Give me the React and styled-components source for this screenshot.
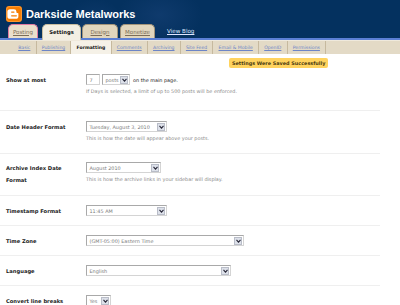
import React from "react";
import styled, { createGlobalStyle } from "styled-components";

const Global = createGlobalStyle`
  html, body { margin: 0; padding: 0; background: #fff; }
  body {
    width: 400px;
    height: 305px;
    overflow: hidden;
    font-family: "DejaVu Sans", Verdana, sans-serif;
  }
`;

const TopBar = styled.header`
  background:
    radial-gradient(ellipse 45px 45px at 95px 30px, rgba(40, 80, 140, 0.35), transparent 70%),
    radial-gradient(ellipse 60px 40px at 160px 15px, rgba(40, 80, 140, 0.3), transparent 70%),
    #04315f;
  display: flex;
  flex-direction: column;
`;

const TitleRow = styled.div`
  display: flex;
  align-items: center;
  gap: 4px;
  height: 18px;
  padding: 5px 0 1px 6px;
`;

const Title = styled.h1`
  margin: 0;
  font-family: "Liberation Sans", Arial, sans-serif;
  font-weight: bold;
  font-size: 11px;
  color: #fff;
`;

const TabRow = styled.nav`
  display: flex;
  align-items: flex-end;
  padding-left: 8px;
  height: 14px;
  border-bottom: 2px solid #5b7fd4;
`;

const Tab = styled.a`
  position: relative;
  box-sizing: border-box;
  width: ${(p) => p.$w}px;
  margin-right: ${(p) => p.$gap || 2}px;
  height: ${(p) => (p.$active ? 16 : 14)}px;
  margin-bottom: ${(p) => (p.$active ? -2 : 0)}px;
  padding-bottom: ${(p) => (p.$active ? 2 : 0)}px;
  display: flex;
  align-items: center;
  justify-content: center;
  border: 1px solid ${(p) => (p.$focus ? "#e07aa2" : p.$active ? "#c9bd9f" : "#a4957a")};
  border-bottom: none;
  border-radius: 5px 5px 0 0;
  background: ${(p) => (p.$active ? "#f3efe3" : p.$focus ? "#e9dfcb" : "#e1d6bd")};
  font-size: ${(p) => (p.$active ? 5.2 : 5.5)}px;
  font-weight: ${(p) => (p.$active ? "bold" : "normal")};
  color: ${(p) => (p.$active ? "#111" : "#7c6d58")};
  text-decoration: ${(p) => (p.$active ? "none" : "underline")};
`;

const ViewBlog = styled.a`
  margin-left: 10px;
  align-self: center;
  font-size: 5.6px;
  color: #dfe6ff;
  text-decoration: underline;
`;

const SubNav = styled.nav`
  display: flex;
  height: 14px;
  background: #e3dac6;
  padding-left: 13px;
  border-top: 1px solid #efe9dc;
  box-sizing: border-box;
`;

const SubItem = styled.a`
  display: flex;
  align-items: center;
  padding: 0 5.2px;
  border-right: 1px solid #c6b99e;
  font-size: 4.6px;
  font-weight: ${(p) => (p.$active ? "bold" : "normal")};
  color: ${(p) => (p.$active ? "#111" : "#6d85c6")};
  text-decoration: ${(p) => (p.$active ? "none" : "underline")};
  background: ${(p) => (p.$active ? "#f5f1e7" : "transparent")};
`;

const NoticeRow = styled.div`
  display: flex;
  padding: 4px 0 0 229px;
`;

const Notice = styled.div`
  height: 10px;
  line-height: 10px;
  padding: 0 3px;
  border-radius: 2px;
  background: #ffd35e;
  color: #4a3a10;
  font-size: 4.9px;
  font-weight: bold;
`;

const Form = styled.div`
  display: flex;
  flex-direction: column;
  width: 380px;
`;

const Row = styled.div`
  display: grid;
  grid-template-columns: 86px 1fr;
  padding: ${(p) => p.$pt ?? 9}px 0 ${(p) => p.$pb ?? 9}px;
  border-bottom: 1px solid #efefef;
  &:last-child { border-bottom: none; }
`;

const Label = styled.div`
  padding: 0 18px 0 6px;
  font-size: 5.2px;
  font-weight: bold;
  line-height: 12px;
  margin: -0.5px 0 -0.5px;
  color: #222;
`;

const Field = styled.div`
  display: flex;
  flex-direction: column;
`;

const Line = styled.div`
  display: flex;
  align-items: center;
  gap: 2px;
  height: 11px;
`;

const Box = styled.div`
  box-sizing: border-box;
  width: ${(p) => p.$w}px;
  height: 11px;
  border: 1px solid #a9a9a9;
  border-right-color: #d4d4d4;
  border-bottom-color: #d4d4d4;
  background: #fff;
  display: flex;
  align-items: center;
  justify-content: space-between;
  padding: 0 1px 0 2.5px;
  font-size: 4.9px;
  color: #7a7a7a;
`;

const ArrowBtn = styled.span`
  box-sizing: border-box;
  width: 8px;
  height: 8px;
  background: #dde1ea;
  border: 1px solid #b9bdc8;
  display: flex;
  align-items: center;
  justify-content: center;
`;

const Inline = styled.span`
  font-size: 4.9px;
  color: #222;
  margin-left: 1px;
`;

const Help = styled.div`
  margin-top: 2px;
  font-size: 4.9px;
  line-height: 9px;
  color: #8a8a8a;
`;

const Arrow = () => (
  <ArrowBtn>
    <svg width="5" height="4" viewBox="0 0 5 4">
      <path d="M0.5 0.8 L2.5 3.2 L4.5 0.8" fill="none" stroke="#2a2a3a" strokeWidth="1.1" />
    </svg>
  </ArrowBtn>
);

const Select = ({ w, children }) => (
  <Box $w={w}>
    <span>{children}</span>
    <Arrow />
  </Box>
);

const Logo = () => (
  <svg width="16" height="16" viewBox="0 0 16 16">
    <rect x="0" y="0" width="16" height="16" rx="3" fill="#f57c00" />
    <rect x="0.6" y="0.6" width="14.8" height="14.8" rx="2.6" fill="none" stroke="#ffb060" strokeWidth="0.6" />
    <path
      d="M4 3.2 h4 a2.4 2.4 0 0 1 2.4 2.4 v0.6 a0.8 0.8 0 0 0 0.8 0.8 h0.6 a0.6 0.6 0 0 1 0.6 0.6 v2.6 a2.6 2.6 0 0 1 -2.6 2.6 h-5.8 a2.6 2.6 0 0 1 -2.6 -2.6 v-4.4 a2.6 2.6 0 0 1 2.6 -2.6 z"
      fill="#fff"
    />
    <rect x="5" y="5.4" width="3.6" height="1.3" rx="0.65" fill="#f57c00" />
    <rect x="5" y="9.2" width="6" height="1.3" rx="0.65" fill="#f57c00" />
  </svg>
);

const subnav = [
  ["Basic", false],
  ["Publishing", false],
  ["Formatting", true],
  ["Comments", false],
  ["Archiving", false],
  ["Site Feed", false],
  ["Email & Mobile", false],
  ["OpenID", false],
  ["Permissions", false],
];

export default function App() {
  return (
    <>
      <Global />
      <TopBar>
        <TitleRow>
          <Logo />
          <Title>Darkside Metalworks</Title>
        </TitleRow>
        <TabRow>
          <Tab $focus $w={30} $gap={4}>Posting</Tab>
          <Tab $active $w={39} $gap={1}>Settings</Tab>
          <Tab $w={36}>Design</Tab>
          <Tab $w={35}>Monetize</Tab>
          <ViewBlog>View Blog</ViewBlog>
        </TabRow>
      </TopBar>
      <SubNav>
        {subnav.map(([t, a]) => (
          <SubItem key={t} $active={a}>{t}</SubItem>
        ))}
      </SubNav>
      <NoticeRow>
        <Notice>Settings Were Saved Successfully</Notice>
      </NoticeRow>
      <Form>
        <Row $pt={6} $pb={14}>
          <Label>Show at most</Label>
          <Field>
            <Line>
              <Box $w={14}>7</Box>
              <Select w={28}>posts</Select>
              <Inline>on the main page.</Inline>
            </Line>
            <Help>If Days is selected, a limit of up to 500 posts will be enforced.</Help>
          </Field>
        </Row>
        <Row $pt={10} $pb={10}>
          <Label>Date Header Format</Label>
          <Field>
            <Line><Select w={81}>Tuesday, August 3, 2010</Select></Line>
            <Help>This is how the date will appear above your posts.</Help>
          </Field>
        </Row>
        <Row $pt={8} $pb={10}>
          <Label>Archive Index Date Format</Label>
          <Field>
            <Line><Select w={75}>August 2010</Select></Line>
            <Help>This is how the archive links in your sidebar will display.</Help>
          </Field>
        </Row>
        <Row>
          <Label>Timestamp Format</Label>
          <Field>
            <Line><Select w={81}>11:45 AM</Select></Line>
          </Field>
        </Row>
        <Row>
          <Label>Time Zone</Label>
          <Field>
            <Line><Select w={158}>(GMT-05:00) Eastern Time</Select></Line>
          </Field>
        </Row>
        <Row>
          <Label>Language</Label>
          <Field>
            <Line><Select w={145}>English</Select></Line>
          </Field>
        </Row>
        <Row>
          <Label>Convert line breaks</Label>
          <Field>
            <Line><Select w={25}>Yes</Select></Line>
          </Field>
        </Row>
      </Form>
    </>
  );
}
